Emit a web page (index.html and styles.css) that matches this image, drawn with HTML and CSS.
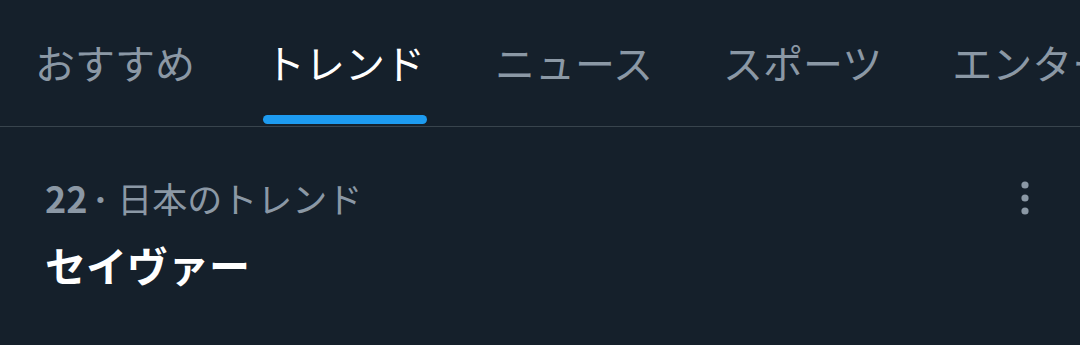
FILE: index.html
```html
<!DOCTYPE html>
<html lang="ja">
<head>
  <meta charset="utf-8">
  <title>トレンド</title>
  <link rel="stylesheet" href="styles.css">
</head>
<body>
  <nav class="tabs">
    <a class="tab">おすすめ</a>
    <a class="tab active">トレンド</a>
    <a class="tab">ニュース</a>
    <a class="tab">スポーツ</a>
    <a class="tab">エンターテイメント</a>
  </nav>

  <div class="trend">
    <div class="trend-body">
      <p class="trend-meta"><span class="rank">22</span><span class="dot">·</span>日本のトレンド</p>
      <p class="trend-title">セイヴァー</p>
    </div>
    <button class="more" aria-label="その他">
      <svg width="10" height="36" viewBox="0 0 10 36">
        <circle cx="5" cy="5" r="3.6" fill="#8b98a5"/>
        <circle cx="5" cy="18" r="3.6" fill="#8b98a5"/>
        <circle cx="5" cy="31" r="3.6" fill="#8b98a5"/>
      </svg>
    </button>
  </div>
</body>
</html>
```

FILE: styles.css
```css
body {
  margin: 0;
  background-color: #15202b;
  font-family: "Noto Sans CJK JP", "Noto Sans", sans-serif;
  color: #8b98a5;
  overflow: hidden;
}

.tabs {
  display: flex;
  height: 126px;
  border-bottom: 1px solid #38444d;
  white-space: nowrap;
  overflow: hidden;
}

.tab {
  position: relative;
  flex: none;
  padding: 0 35px;
  margin-top: -1px;
  font-size: 40px;
  line-height: 126px;
  height: 126px;
  color: #8b98a5;
}

.tab.active {
  color: #ffffff;
}

.tab.active::after {
  content: "";
  position: absolute;
  left: 33px;
  right: 33px;
  bottom: 1px;
  height: 9px;
  border-radius: 5px;
  background-color: #1d9bf0;
}

.trend {
  display: flex;
  justify-content: space-between;
  padding: 47px 50px 0 45px;
}

.trend-body p {
  margin: 0;
}

.trend-meta {
  font-size: 35px;
  line-height: 46px;
  color: #8b98a5;
}

.rank {
  font-weight: 700;
  font-size: 36px;
}

.dot {
  font-family: "Noto Sans", sans-serif;
  font-weight: 700;
  margin: 0 12px 0 8px;
}

.trend-title {
  margin-top: 16px !important;
  font-size: 41px;
  font-weight: 700;
  line-height: 50px;
  color: #ffffff;
}

.more {
  background: none;
  border: none;
  padding: 0;
  height: 36px;
  margin-top: 6px;
}
```
